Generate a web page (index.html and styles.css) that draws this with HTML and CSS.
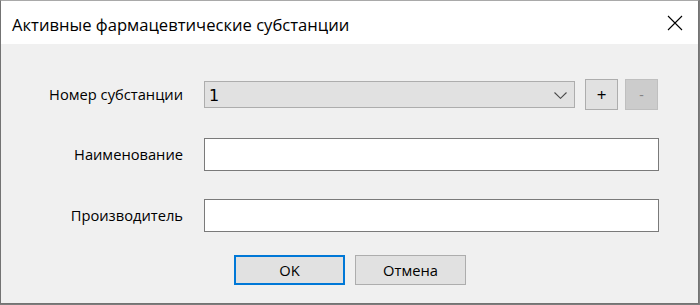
FILE: index.html
```html
<!DOCTYPE html>
<html lang="ru">
<head>
<meta charset="utf-8">
<title>Активные фармацевтические субстанции</title>
<link rel="stylesheet" href="styles.css">
</head>
<body>
<div class="window">
  <div class="titlebar">
    <span class="title">Активные фармацевтические субстанции</span>
    <svg class="close" width="16" height="16" viewBox="0 0 16 16" aria-hidden="true">
      <path d="M1 1 L15 15 M15 1 L1 15" stroke="#000" stroke-width="1.1" fill="none"/>
    </svg>
  </div>
  <div class="content">
    <div class="row row-first">
      <label class="label">Номер субстанции</label>
      <div class="combo">
        <span class="combo-value">1</span>
        <svg class="chevron" width="13" height="7" viewBox="0 0 13 7" aria-hidden="true">
          <path d="M0.5 0.5 L6.5 6.3 L12.5 0.5" stroke="#4a4a4a" stroke-width="1.1" fill="none"/>
        </svg>
      </div>
      <button class="sq-btn plus">+</button>
      <button class="sq-btn minus" disabled>-</button>
    </div>
    <div class="row row-field">
      <label class="label">Наименование</label>
      <input class="text-input" type="text">
    </div>
    <div class="row row-field">
      <label class="label">Производитель</label>
      <input class="text-input" type="text">
    </div>
    <div class="actions">
      <button class="btn btn-default">OK</button>
      <button class="btn">Отмена</button>
    </div>
  </div>
</div>
</body>
</html>
```
FILE: styles.css
```css
html, body {
  margin: 0;
  padding: 0;
}
body {
  width: 700px;
  height: 305px;
  background: #7d7d7d;
  font-family: "Open Sans", "Noto Sans", sans-serif;
  color: #000;
  overflow: hidden;
}
.window {
  box-sizing: border-box;
  width: 699px;
  height: 304px;
  border: 1px solid #737373;
  border-top-color: #a9a9a9;
  display: flex;
  flex-direction: column;
  background: #f0f0f0;
}
.titlebar {
  height: 43px;
  flex: none;
  background: #fff;
  display: flex;
  align-items: center;
  justify-content: space-between;
  padding-left: 11px;
  box-sizing: border-box;
}
.title {
  font-size: 16.6px;
  padding-top: 3px;
  letter-spacing: 0;
}
.close {
  margin-right: 15px;
  margin-top: 1px;
}
.content {
  flex: 1;
  padding-top: 35px;
  display: flex;
  flex-direction: column;
}
.row {
  display: flex;
  align-items: center;
}
.row-first {
  height: 31px;
}
.row-field {
  margin-top: 28px;
}
.label {
  width: 182px;
  flex: none;
  text-align: right;
  font-size: 14.7px;
  margin-right: 21px;
  margin-top: -2px;
}
.combo {
  box-sizing: border-box;
  width: 371px;
  height: 27px;
  border: 1px solid #adadad;
  background: #e1e1e1;
  display: flex;
  align-items: center;
  justify-content: space-between;
  padding-left: 4px;
  padding-right: 7px;
}
.combo-value {
  font-family: "DejaVu Sans", sans-serif;
  font-size: 16px;
  margin-top: 1px;
}
.chevron {
  display: block;
  margin-top: 1px;
}
.sq-btn {
  box-sizing: border-box;
  width: 33px;
  height: 31px;
  border: 1px solid #adadad;
  background: #e1e1e1;
  font-family: "Open Sans", sans-serif;
  font-size: 17px;
  padding: 0;
  color: #000;
  line-height: 1;
}
.plus {
  margin-left: 10px;
}
.minus {
  margin-left: 7px;
  background: #cccccc;
  border-color: #bfbfbf;
  color: #838383;
  font-size: 14px;
}
.text-input {
  box-sizing: border-box;
  width: 455px;
  height: 33px;
  border: 1px solid #7a7a7a;
  background: #fff;
  margin: 0;
  padding: 0 4px;
  outline: none;
}
.actions {
  margin-top: 23px;
  display: flex;
  justify-content: center;
  gap: 10px;
  padding-left: 1px;
}
.btn {
  box-sizing: border-box;
  width: 111px;
  height: 30px;
  border: 1px solid #adadad;
  background: #e1e1e1;
  font-family: "Open Sans", sans-serif;
  font-size: 14.7px;
  color: #000;
  padding: 0;
}
.btn-default {
  border: 2px solid #0078d7;
}
```
